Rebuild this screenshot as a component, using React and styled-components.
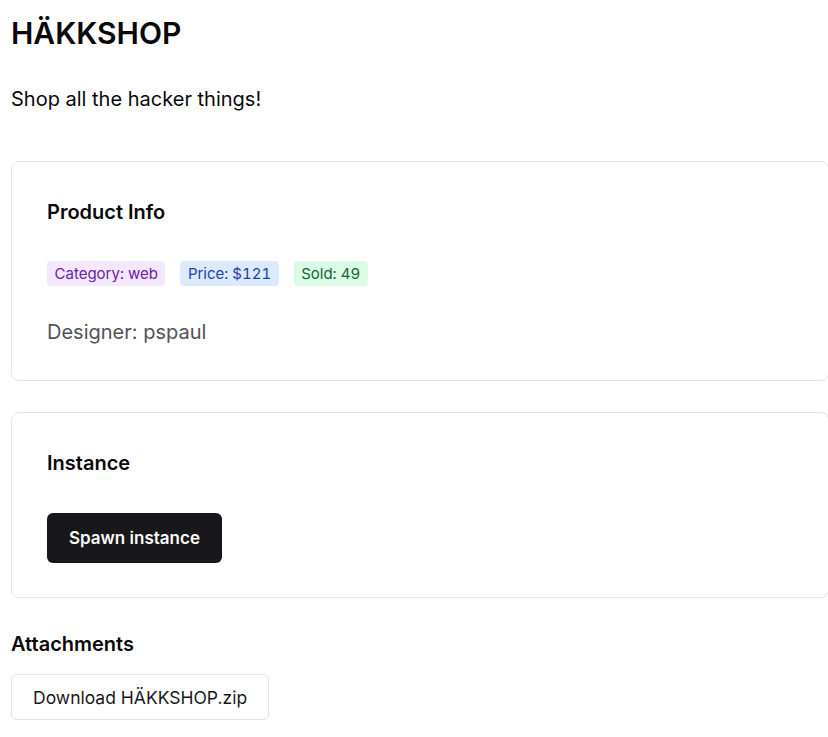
import React from "react";
import styled, { createGlobalStyle } from "styled-components";

const Global = createGlobalStyle`
  html, body { margin: 0; padding: 0; background: #ffffff; }
  body { font-family: Inter, "Noto Sans", sans-serif; color: #09090b; }
`;

const Page = styled.main`
  display: flex;
  flex-direction: column;
  align-items: flex-start;
  padding: 15px 0 20px 11px;
  width: 818px;
`;

const Title = styled.h1`
  margin: 0;
  font-size: 30px;
  line-height: 36px;
  font-weight: 600;
`;

const Subtitle = styled.p`
  margin: 34px 0 0;
  font-size: 20px;
  line-height: 28px;
  font-weight: 400;
`;

const Card = styled.section`
  box-sizing: border-box;
  align-self: stretch;
  margin-top: ${(p) => p.$mt}px;
  border: 1px solid #e4e4e7;
  border-radius: 8px;
  padding: 36px 35px 34px;
  display: flex;
  flex-direction: column;
  align-items: flex-start;
`;

const CardTitle = styled.h2`
  margin: 0;
  font-size: 20px;
  line-height: 28px;
  font-weight: 600;
`;

const BadgeRow = styled.div`
  display: flex;
  gap: 15px;
  margin-top: 35px;
`;

const tones = {
  purple: { bg: "#f3e8ff", fg: "#6b21a8" },
  blue: { bg: "#dbeafe", fg: "#1e40af" },
  green: { bg: "#dcfce7", fg: "#166534" },
};

const Badge = styled.span`
  display: inline-block;
  padding: 2px 7.5px;
  border-radius: 4px;
  font-size: 15px;
  line-height: 21px;
  font-weight: 400;
  font-variant-numeric: tabular-nums;
  background: ${(p) => tones[p.$tone].bg};
  color: ${(p) => tones[p.$tone].fg};
`;

const Meta = styled.p`
  margin: 32px 0 0;
  font-size: 20px;
  line-height: 28px;
  color: #52525b;
`;

const PrimaryButton = styled.button`
  margin-top: 36px;
  height: 50px;
  padding: 0 22px;
  border: none;
  border-radius: 6px;
  background: #18181b;
  color: #fafafa;
  font-family: inherit;
  font-size: 17px;
  font-weight: 600;
  cursor: pointer;
`;

const SectionTitle = styled.h2`
  margin: 32px 0 0;
  font-size: 20px;
  line-height: 28px;
  font-weight: 600;
`;

const OutlineButton = styled.button`
  margin-top: 16px;
  height: 46px;
  padding: 0 21px;
  border: 1px solid #e4e4e7;
  border-radius: 6px;
  background: #ffffff;
  color: #18181b;
  font-family: inherit;
  font-size: 17.5px;
  font-weight: 400;
  cursor: pointer;
`;

export default function App() {
  return (
    <>
      <Global />
      <Page>
        <Title>HÄKKSHOP</Title>
        <Subtitle>Shop all the hacker things!</Subtitle>
        <Card $mt={48}>
          <CardTitle>Product Info</CardTitle>
          <BadgeRow>
            <Badge $tone="purple">Category: web</Badge>
            <Badge $tone="blue">Price: $121</Badge>
            <Badge $tone="green">Sold: 49</Badge>
          </BadgeRow>
          <Meta>Designer: pspaul</Meta>
        </Card>
        <Card $mt={31}>
          <CardTitle>Instance</CardTitle>
          <PrimaryButton>Spawn instance</PrimaryButton>
        </Card>
        <SectionTitle>Attachments</SectionTitle>
        <OutlineButton>Download HÄKKSHOP.zip</OutlineButton>
      </Page>
    </>
  );
}
